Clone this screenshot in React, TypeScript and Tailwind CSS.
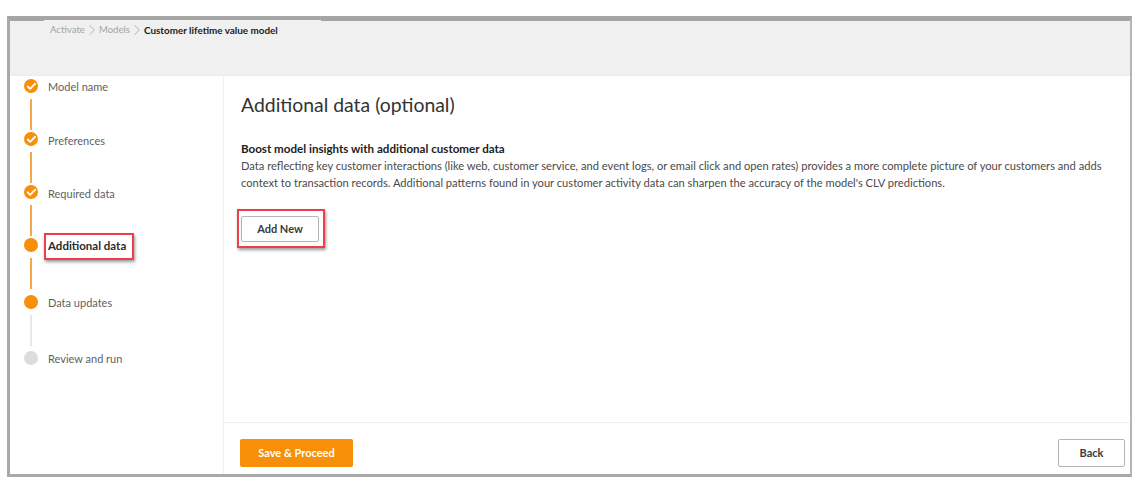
import { Check, ChevronRight } from 'lucide-react'

type Step = {
  label: string
  state: 'done' | 'current' | 'todo'
  rowClass: string
  labelClass: string
  lineClass?: string
  bold?: boolean
  boxed?: boolean
}

const steps: Step[] = [
  { label: 'Model name', state: 'done', rowClass: 'h-[53px]', labelClass: 'pt-[1px]', lineClass: 'bg-[#f5a94a]' },
  { label: 'Preferences', state: 'done', rowClass: 'h-[53px]', labelClass: 'pt-[2px]', lineClass: 'bg-[#f5a94a]' },
  { label: 'Required data', state: 'done', rowClass: 'h-[53px]', labelClass: 'pt-[2px]', lineClass: 'bg-[#f5a94a]' },
  { label: 'Additional data', state: 'current', rowClass: 'h-[57px]', labelClass: 'pt-[1px]', lineClass: 'bg-[#f5a94a]', bold: true, boxed: true },
  { label: 'Data updates', state: 'current', rowClass: 'h-[56px]', labelClass: 'pt-[1px]', lineClass: 'bg-[#e8e8e8]' },
  { label: 'Review and run', state: 'todo', rowClass: 'h-[40px]', labelClass: 'pt-[1px]' },
]

function StepDot({ state }: { state: Step['state'] }) {
  if (state === 'done') {
    return (
      <span className="flex h-[14px] w-[14px] items-center justify-center rounded-full bg-[#f78f08]">
        <Check size={11} strokeWidth={4} className="text-white" />
      </span>
    )
  }
  return <span className={state === 'current' ? 'h-[14px] w-[14px] rounded-full bg-[#f78f08]' : 'h-[14px] w-[14px] rounded-full bg-[#dcdcdc]'} />
}

function StepRow({ step }: { step: Step }) {
  return (
    <li className={`flex ${step.rowClass}`}>
      <div className="flex w-[14px] flex-col items-center">
        <StepDot state={step.state} />
        {step.lineClass ? <span className={`mt-[6px] h-[31px] w-[1.5px] ${step.lineClass}`} /> : null}
      </div>
      <div className={`relative ml-[10px] h-[14px] ${step.labelClass}`}>
        {step.boxed ? (
          <span className="absolute left-[-4px] top-[-5px] h-[27px] w-[90px] border-2 border-[#ee3e4a] shadow-[1px_2px_3px_rgba(0,0,0,0.4)]" />
        ) : null}
        <span className={step.bold ? 'relative block whitespace-nowrap text-[11.5px] leading-[14px] font-bold text-[#2b2b2b]' : 'relative block whitespace-nowrap text-[11px] leading-[14px] text-[#5f5f5f]'}>
          {step.label}
        </span>
      </div>
    </li>
  )
}

export default function App() {
  return (
    <div className="h-[481px] w-[1140px] overflow-hidden bg-white pb-[4px] pl-[7px] pr-[8px] pt-[16px] font-['Lato',sans-serif]">
      <div className="flex h-full flex-col border-b-[3px] border-l-[3px] border-r-[2px] border-t-[5px] border-b-[#a9a9a9] border-l-[#a9a9a9] border-r-[#b5b5b5] border-t-[#a5a5a5]">
        <header className="h-[55px] shrink-0 border-b border-[#ececec] bg-[#f0f0f0]">
          <div className="ml-[34px] mt-[-1px] flex h-[17px] w-[277px] items-center border-t-2 border-[#f0f0f0] pl-[6px] leading-[14px]">
            <span className="text-[9.6px] text-[#a3a3a3]">Activate</span>
            <ChevronRight size={18} strokeWidth={0.8} className="mx-[-2px] text-[#8f8f8f]" />
            <span className="text-[9.6px] text-[#a3a3a3]">Models</span>
            <ChevronRight size={18} strokeWidth={0.8} className="mx-[-2px] text-[#8f8f8f]" />
            <span className="text-[9.9px] font-bold text-[#1c1c1c]">Customer lifetime value model</span>
          </div>
        </header>
        <div className="flex min-h-0 flex-1">
          <aside className="w-[213px] shrink-0 pl-[14px] pt-[3px]">
            <ol>
              {steps.map((step) => (
                <StepRow key={step.label} step={step} />
              ))}
            </ol>
          </aside>
          <main className="flex min-w-0 flex-1 flex-col border-l border-[#f0f0f0]">
            <div className="flex-1 pl-[17px] pr-[14px] pt-[17px]">
              <h1 className="text-[19.4px] leading-[24px] text-[#333333]">Additional data (optional)</h1>
              <h2 className="mt-[23px] text-[11.6px] leading-[17px] font-bold text-[#222222]">Boost model insights with additional customer data</h2>
              <p className="text-[11.15px] leading-[17px] text-[#4a4a4a]">
                Data reflecting key customer interactions (like web, customer service, and event logs, or email click and open rates) provides a more complete picture of your customers and adds context to transaction records. Additional patterns found in your customer activity data can sharpen the accuracy of the model's CLV predictions.
              </p>
              <div className="ml-[-4px] mt-[18px] w-fit border-2 border-[#ee3e4a] pb-[4px] pl-[2px] pr-[4px] pt-[5px] shadow-[1px_2px_3px_rgba(0,0,0,0.4)]">
                <button className="block h-[26px] w-[78px] rounded-[2px] border border-[#b5b5b5] bg-white text-[11px] font-bold text-[#3a3a3a]">Add New</button>
              </div>
            </div>
            <footer className="flex h-[52px] shrink-0 items-start justify-between border-t border-[#f0f0f0] pl-[16px] pr-[5px] pt-[16px]">
              <button className="h-[28px] w-[113px] rounded-[2px] bg-[#f78f08] text-[11px] font-bold text-white">Save &amp; Proceed</button>
              <button className="h-[28px] w-[67px] rounded-[2px] border border-[#b5b5b5] bg-white text-[11px] font-bold text-[#3a3a3a]">Back</button>
            </footer>
          </main>
        </div>
      </div>
    </div>
  )
}
